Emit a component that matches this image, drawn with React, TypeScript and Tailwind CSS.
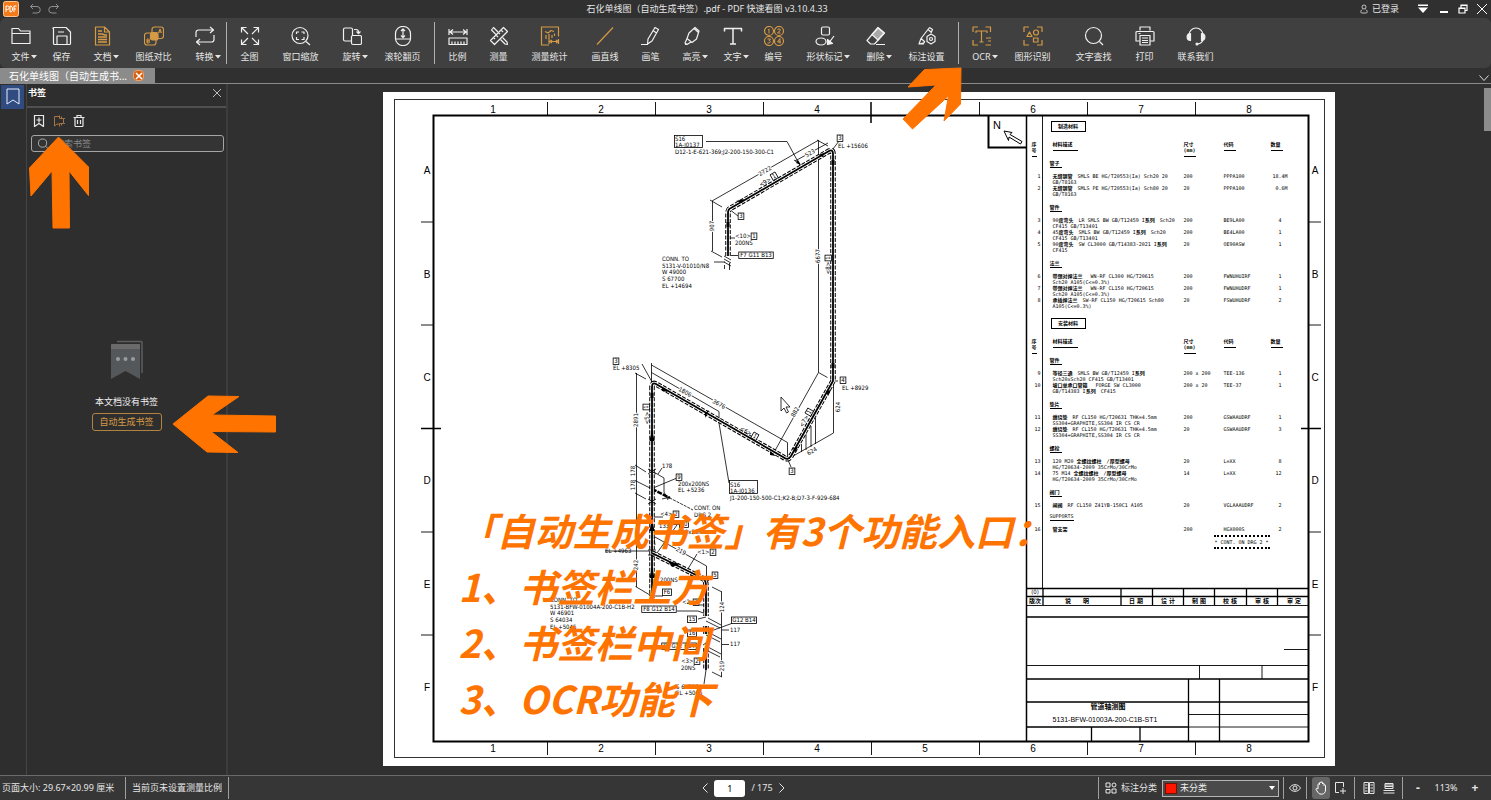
import React from "react";
import clsx from "clsx";

const GOLD = "text-[#d69a45]";

/* ---------- toolbar icons, drawn on a 20 x 20 grid ---------- */

const icons: Record<string, React.ReactNode> = {
  folder: <path d="M1 17.5V2.5h6.5l2 2.5H19v12.5zM1 7.5h18" />,
  save: <path d="M1.5 2.5v15a1 1 0 0 0 1 1h15a1 1 0 0 0 1-1V6l-4.500-4.500h-12a1 1 0 0 0-1 1zM5 18.500V10h10v8.500M6 6h6" />,
  doc: (
    <>
      <path d="M2.500 1h9l5 5v13h-14zM11.500 1v5h5" />
      <path d="M5 5h4M5 8h4l3 1h2M5 11h9M5 13.500h9M5 16h9" strokeWidth="1.500" />
    </>
  ),
  compare: (
    <>
      <rect x="8" y="1" width="11.500" height="11.500" rx="2.500" />
      <rect x="0.500" y="7" width="11.500" height="12" rx="2.500" />
      <rect x="6.500" y="6.500" width="7.500" height="7.500" rx="2" fill="currentColor" />
      <path d="M14.500 7l1.500-4 1.500 4M15 6h2M3 13v4h1.500a1 1 0 0 0 0-2H3h1.500a1 1 0 0 0 0-2z" strokeWidth="1" />
    </>
  ),
  convert: <path d="M1 11V6.500A2.500 2.500 0 0 1 3.500 4H18M15 1l3.500 3L15 7M19 9v4.500a2.500 2.500 0 0 1-2.500 2.500H2M5 13l-3.500 3L5 19" />,
  full: <path d="M8 8L1.500 1.500M1.500 6.500v-5h5M12 8l6.500-6.500M13.500 1.500h5v5M8 12l-6.500 6.500M1.500 13.500v5h5M12 12l6.500 6.500M18.500 13.500v5h-5" />,
  zoomWindow: (
    <>
      <circle cx="9" cy="9.500" r="8" />
      <path d="M15 15.500l4 3.500M5.500 8V6H8M10.500 6H13v2M13 11v2.500h-2.500M8 13.500H5.500V11" />
    </>
  ),
  rotate: <path d="M9 15H3a1.500 1.500 0 0 1-1.500-1.500v-10A1.500 1.500 0 0 1 3 2h6a1.500 1.500 0 0 1 1.500 1.500V9M10.500 9.500H18a1.500 1.500 0 0 1 1.500 1.500v6a1.500 1.500 0 0 1-1.500 1.500h-7A1.500 1.500 0 0 1 9.500 17v-6a1.500 1.500 0 0 1 1-1.500zM12 3.500h2A2.500 2.500 0 0 1 16.500 6v1M14.500 5.500l2 2 2-2" />,
  mouse: (
    <>
      <rect x="2.500" y="0.500" width="15" height="19" rx="7" />
      <path d="M3 13h14M10 3.500V11M8 5l2-2 2 2M8 9.500l2 2 2-2" />
    </>
  ),
  ratio: <path d="M1 3v6M19 3v6M2 6h16M5 3.500L2 6l3 2.500M15 3.500L18 6l-3 2.500M1 12h18v6.500H1zM4 15.500v3M7 15.500v3M10 15.500v3M13 15.500v3M16 15.500v3" />,
  measure: (
    <>
      <path d="M14.500 1.500l4 4L5.500 18.500l-4-4zM12 4l2 2M9.500 6.500l1.500 1.500M7 9l2 2M4.500 11.500L6 13" />
      <path d="M7 8.500L2.500 4l2-2.500L9 6M11.500 13.500l4.500 4.500 2.500.500-.500-2.500-4.500-4.500M2.500 4l4 4" />
    </>
  ),
  stats: (
    <>
      <path d="M9 19H1.500V1h17v9.500M5 5.500l3 1.500 3-2.500 3 1" />
      <path d="M6 9v4M9 8v5M12 9v3M14.500 7.500V10" />
      <path d="M9 13v5M18.500 13v5M10 15.500h8M12 14l-2 1.500L12 17M16 14l2 1.500-2 1.500" />
    </>
  ),
  line: <path d="M2 18.500L18 1.500" />,
  pen: <path d="M14 1.500l3.500 2L11 15l-4.500 3 .500-5zM12 4.500L15.500 7M0 18.500h7" />,
  marker: <path d="M13 1.500l4 3.500-2.500 8-4.500 3.500-5-4 2-5.500zM5 12.500L3 17l2 1.500 4-2.500M12 2.500l4.500 4M3 18.500h3" />,
  text: <path d="M1.500 5.500v-3h17v3M10 2.500v15.500M7 18h6" strokeWidth="1.500" />,
  numbers: (
    <>
      <circle cx="5" cy="5" r="4.500" />
      <circle cx="15" cy="5" r="4.500" />
      <circle cx="5" cy="15" r="4.500" />
      <circle cx="15" cy="15" r="4.500" />
      <path d="M4 4l1-1v4.500M13.500 4c0-1.500 3-1.500 3 0 0 1-3 2-3 3h3M3.500 13h3L5 14.500c2 0 2 3-1.500 2.500M16 17.500v-5L13.500 16h3.500" strokeWidth="1" />
    </>
  ),
  shapes: (
    <>
      <rect x="6.500" y="1" width="8" height="8" rx="1.500" />
      <ellipse cx="6" cy="15.500" rx="5" ry="3.500" />
      <path d="M19 10l-6 8" />
      <path d="M12.500 13.500v5l5-1z" fill="currentColor" />
    </>
  ),
  eraser: (
    <>
      <path d="M12 1.500l6.500 5.500L8.500 18H4.500L1 14.500zM10 18.500h9" />
      <path d="M12 2l6 5-6 7-6-5.500z" fill="currentColor" fillOpacity="0.600" />
    </>
  ),
  markSettings: (
    <>
      <path d="M12.500 1.500l3 2L14 7M12.500 1.500L4 12.500 2 18l6-1.500M4 12.500l4 3.500M2 18h5M11 3.500l3 2.500" />
      <path d="M14 8l4 2.500v5L14 18l-4-2.500v-5z" />
      <circle cx="14" cy="13" r="1.500" />
    </>
  ),
  ocr: <path d="M1 6V1h5M13.500 1h5v5M1 14v5h5M4 7V5h11v2M9.500 5v11M7.500 16h4M14 12h5M16 15h3M13.500 19h5.500" />,
  recognize: (
    <>
      <path d="M1 6V1h5M14 1h5v5M1 14v5h5M14 19h5v-5M4 10.500L6.500 6 9 10.500z" />
      <circle cx="13" cy="6.500" r="2.500" />
      <path d="M10.500 12h4.500v4h-4.500z" />
    </>
  ),
  search: (
    <>
      <circle cx="9.500" cy="9.500" r="8" />
      <path d="M15.500 15.500l3.500 3.500" />
    </>
  ),
  print: <path d="M5 4.500V1h10v3.500M4.500 15H1V6.500a1 1 0 0 1 1-1h16a1 1 0 0 1 1 1V15h-3.500M5 9.500h10V19H5zM7 12h6M7 14.500h6M7 16.500h6M3.500 7.500h2" />,
  headset: (
    <>
      <path d="M3 12V9a7 7 0 0 1 14 0v3.500c0 3-2 5-5 5.500" />
      <path d="M4.500 7.500v7C0 14.500 0 7.500 4.500 7.500zM15.500 7.500v7c4.500 0 4.500-7 0-7z" fill="currentColor" />
      <circle cx="11" cy="18" r="1" fill="currentColor" />
    </>
  ),
};

function Icon({ name, className }: { name: string; className?: string }) {
  return (
    <svg viewBox="0 0 20 20" className={clsx("size-5 shrink-0", className)} fill="none" stroke="currentColor" strokeWidth="1.200" strokeLinejoin="round" aria-hidden="true">
      {icons[name]}
    </svg>
  );
}

type Tool = { icon: string; label: string; gold?: boolean; menu?: boolean };

const toolGroups: Tool[][] = [
  [
    { icon: "folder", label: "文件", menu: true },
    { icon: "save", label: "保存" },
    { icon: "doc", label: "文档", gold: true, menu: true },
    { icon: "compare", label: "图纸对比", gold: true },
    { icon: "convert", label: "转换", menu: true },
  ],
  [
    { icon: "full", label: "全图" },
    { icon: "zoomWindow", label: "窗口缩放" },
    { icon: "rotate", label: "旋转", menu: true },
    { icon: "mouse", label: "滚轮翻页" },
  ],
  [
    { icon: "ratio", label: "比例" },
    { icon: "measure", label: "测量" },
    { icon: "stats", label: "测量统计", gold: true },
    { icon: "line", label: "画直线", gold: true },
    { icon: "pen", label: "画笔" },
    { icon: "marker", label: "高亮", menu: true },
    { icon: "text", label: "文字", menu: true },
    { icon: "numbers", label: "编号", gold: true },
    { icon: "shapes", label: "形状标记", menu: true },
    { icon: "eraser", label: "删除", menu: true },
    { icon: "markSettings", label: "标注设置" },
  ],
  [
    { icon: "ocr", label: "OCR", gold: true, menu: true },
    { icon: "recognize", label: "图形识别", gold: true },
    { icon: "search", label: "文字查找" },
    { icon: "print", label: "打印" },
    { icon: "headset", label: "联系我们" },
  ],
];

function toolWidth(label: string) {
  if (label.length === 4) return "w-[61px]";
  if (label === "画直线") return "w-[50px]";
  return "w-[41px]";
}

function Toolbar() {
  return (
    <div className="flex h-[50px] shrink-0 rounded-md bg-[#404040]" role="toolbar">
      {toolGroups.map((group, i) => (
        <React.Fragment key={i}>
          {i > 0 && <div className="mt-1 mr-0.5 ml-px h-[42px] w-px shrink-0 bg-[#b0b0b0]" />}
          {group.map((tool) => (
            <button key={tool.label} type="button" className={clsx("flex shrink-0 flex-col items-center gap-1 pt-2", toolWidth(tool.label))}>
              <Icon name={tool.icon} className={tool.gold ? GOLD : "text-[#f0f0f0]"} />
              <span className="relative text-[9px] leading-[13px] whitespace-nowrap">
                {tool.label}
                {tool.menu && (
                  <svg viewBox="0 0 6 4" className="absolute top-[5px] left-full ml-px h-1 w-1.5" fill="currentColor" aria-hidden="true">
                    <path d="M0 0h6L3 3.500z" />
                  </svg>
                )}
              </span>
            </button>
          ))}
        </React.Fragment>
      ))}
    </div>
  );
}

function TitleBar() {
  return (
    <header className="grid h-[18px] shrink-0 grid-cols-[1fr_auto_1fr] items-center pr-1 pl-[3px] text-[9px]">
      <div className="flex items-center">
        <svg viewBox="0 0 16 16" className="size-4" aria-hidden="true">
          <rect x="0.500" y="0.500" width="15" height="15" rx="2" fill="#f47b1c" stroke="#ffc58f" />
          <path d="M3 11V5h1.500a1.500 1.500 0 0 1 0 3.500H3M7 5v6c3.500 0 3.500-6 0-6M11 11V5h2.500M11 8h2" fill="none" stroke="#fff" />
        </svg>
        <button type="button" aria-label="撤销" className="ml-2.5 text-[#8f8f8f]">
          <svg viewBox="0 0 12 12" className="size-3" fill="none" stroke="currentColor">
            <path d="M4 1L1.500 3.500 4 6M1.500 3.500H8a3 3 0 0 1 0 6.500H3.500" />
          </svg>
        </button>
        <button type="button" aria-label="重做" className="ml-[7px] text-[#8f8f8f]">
          <svg viewBox="0 0 12 12" className="size-3" fill="none" stroke="currentColor">
            <path d="M8 1l2.500 2.500L8 6M10.500 3.500H4A3 3 0 0 0 4 10h4.500" />
          </svg>
        </button>
      </div>
      <h1 className="pr-[76px] whitespace-pre">石化单线图（自动生成书签）.pdf - PDF 快速看图 v3.10.4.33</h1>
      <div className="flex items-center justify-end">
        <button type="button" className="flex items-center gap-1">
          <svg viewBox="0 0 10 12" className="h-2.5 w-2" fill="none" stroke="currentColor">
            <circle cx="5" cy="3.500" r="2.500" />
            <path d="M3 6.500c-3 2-2 4.500-1 4.500h6c1 0 2-2.500-1-4.500" />
          </svg>
          已登录
        </button>
        <button type="button" aria-label="皮肤" className="ml-[18px]">
          <svg viewBox="0 0 12 10" className="h-2.5 w-3" fill="#fff">
            <path d="M1 0.500h10v1.500H1zM1 3.500h10L6 9z" />
          </svg>
        </button>
        <button type="button" aria-label="最小化" className="ml-2.5">
          <svg viewBox="0 0 10 10" className="size-2.5" stroke="#fff" strokeWidth="2">
            <path d="M1 8h8" />
          </svg>
        </button>
        <button type="button" aria-label="还原" className="ml-[9px]">
          <svg viewBox="0 0 10 10" className="size-2.5" stroke="#fff" fill="none" strokeWidth="1.200">
            <path d="M1 4h6v5H1zM3 4V1h6v5.500H7M1 4.500h6M3 1.500h6" />
          </svg>
        </button>
        <button type="button" aria-label="关闭" className="ml-[9px]">
          <svg viewBox="0 0 10 10" className="size-2.5" stroke="#fff">
            <path d="M0 0l10 10M10 0L0 10" />
          </svg>
        </button>
      </div>
    </header>
  );
}

function TabBar() {
  return (
    <div className="flex h-4 shrink-0 items-stretch border-b border-[#8a8a8a]">
      <div className="flex w-[155px] items-center gap-1 bg-[#8b8b8b] pl-[9px] text-[10px] leading-4 text-white">
        <span className="w-[120px] truncate">石化单线图（自动生成书...</span>
        <button type="button" aria-label="关闭标签" className="grid size-[11px] place-items-center rounded-sm border border-[#f0a060] bg-[#d45f14]">
          <svg viewBox="0 0 8 8" className="size-2" stroke="#fff" strokeWidth="1.500">
            <path d="M1 1l6 6M7 1L1 7" />
          </svg>
        </button>
      </div>
      <button type="button" aria-label="更多标签" className="mt-1 mr-[2px] ml-auto">
        <svg viewBox="0 0 10 10" className="size-2.5" fill="none" stroke="#ddd">
          <path d="M0.500 2.500L5 7.500l4.500-5" />
        </svg>
      </button>
    </div>
  );
}

function BookmarkPanel() {
  return (
    <aside className="flex shrink-0 bg-[#2e2e2e]">
      <nav className="w-[27px] border-r border-[#454545] pt-px pl-px">
        <button type="button" aria-label="书签" className="grid h-6 w-[23px] place-items-center bg-[#2f4b80]">
          <svg viewBox="0 0 14 18" className="h-[18px] w-3.5" fill="none" stroke="#e8eefc">
            <path d="M1 1h12v15l-6-4-6 4z" />
          </svg>
        </button>
      </nav>
      <section className="flex w-[201px] flex-col border-r-2 border-[#3d3d3d]">
        <div className="flex h-6 items-center justify-between border-b-2 border-[#505050] pr-1 pb-1 pl-px">
          <h2 className="text-[9px] leading-3 font-bold text-white">书签</h2>
          <button type="button" aria-label="关闭面板">
            <svg viewBox="0 0 10 10" className="size-2.5" stroke="#bbb">
              <path d="M1 1l8 8M9 1L1 9" />
            </svg>
          </button>
        </div>
        <div className="flex gap-2 pt-[7px] pl-1.5 text-[#e8e8e8]">
          <button type="button" aria-label="添加书签">
            <svg viewBox="0 0 12 12" className="size-3" fill="none" stroke="currentColor" strokeWidth="1.200">
              <path d="M2 0.500h8.500v11L6 8.500l-4.500 3V0.500zM6 2.500v5M3.500 5h5" />
            </svg>
          </button>
          <button type="button" aria-label="自动生成书签" className="text-[#a87443]">
            <svg viewBox="0 0 12 12" className="size-3" fill="none" stroke="currentColor">
              <path d="M6.500 1.500h-5v9.500L4 9h2.500v2.500M6.500 0.500v3h4v5h-4M8.500 1.500v2M10.500 3.500h1.500M10.500 8.500H12M8.500 8.500v2" />
            </svg>
          </button>
          <button type="button" aria-label="删除书签">
            <svg viewBox="0 0 12 12" className="size-3" fill="none" stroke="currentColor" strokeWidth="1.200">
              <path d="M0.500 2.500h11M4 2.500v-2h4v2M2 2.500v8a1 1 0 0 0 1 1h6a1 1 0 0 0 1-1v-8M4.500 5v4M7.500 5v4" />
            </svg>
          </button>
        </div>
        <label className="mx-1 mt-2 mr-[2px] flex h-[17px] items-center rounded-[3px] border border-[#a5a5a5] bg-[#343434] pl-1.5">
          <svg viewBox="0 0 12 12" className="size-3 text-[#b5b5b5]" fill="none" stroke="currentColor">
            <circle cx="5" cy="5" r="4.500" />
            <path d="M8.500 8.500L11 11" />
          </svg>
          <input type="search" aria-label="搜索书签" placeholder="搜索书签" className="ml-1.5 w-full min-w-0 bg-transparent text-[9px] leading-3 outline-none placeholder:text-[#8a8a8a]" />
        </label>
        <div className="flex grow flex-col items-center pt-[188px]">
          <svg viewBox="0 0 32 40" className="h-10 w-8" aria-hidden="true">
            <path d="M6 1.500h24a1 1 0 0 1 1 1V33" fill="none" stroke="#5c5e60" strokeWidth="1.500" />
            <path d="M0 5a1 1 0 0 1 1-1h27a1 1 0 0 1 1 1v34L14.500 31 0 39z" fill="#55585b" />
            <path d="M0 5a1 1 0 0 1 1-1h27a1 1 0 0 1 1 1v4H0z" fill="#6b6b6b" />
            <circle cx="7" cy="19" r="2" fill="#9a9c9e" />
            <circle cx="14.500" cy="19" r="2" fill="#9a9c9e" />
            <circle cx="22" cy="19" r="2" fill="#9a9c9e" />
          </svg>
          <p className="mt-4 text-[9px] leading-3 text-[#f0f0f0]">本文档没有书签</p>
          <button type="button" className="mt-[5px] h-[18px] w-[70px] rounded-[3px] border border-[#b08342] text-[9px] leading-3 text-[#d69a45]">
            自动生成书签
          </button>
        </div>
      </section>
    </aside>
  );
}

/* ---------- drawing sheet ---------- */

const DRAWING_FONT = "font-['DejaVu_Sans_Condensed','DejaVu_Sans','Noto_Sans_CJK_SC',sans-serif]";
const TABLE_FONT = "font-['DejaVu_Sans_Mono','Noto_Sans_CJK_SC',monospace]";

type LabelProps = { x: number; y: number; t: string; r?: number; mid?: boolean; size?: number; bold?: boolean; halo?: boolean };

function Label({ x, y, t, r = 0, mid, size = 6, bold, halo }: LabelProps) {
  return (
    <text
      x={x}
      y={y + size * 0.35}
      fontSize={size}
      fontWeight={bold ? 700 : 400}
      textAnchor={mid ? "middle" : "start"}
      transform={r ? `rotate(${r} ${x} ${y})` : undefined}
      fill="#000"
      stroke={halo ? "#fff" : "none"}
      strokeWidth={halo ? 2 : 0}
      paintOrder="stroke"
    >
      {t}
    </text>
  );
}

const Dim = ({ x, y, t, r }: { x: number; y: number; t: string; r?: number }) => <Label x={x} y={y} t={t} r={r} mid halo />;

function Tag({ x, y, t, r = 0 }: { x: number; y: number; t: string; r?: number }) {
  const w = t.length * 3.2 + 2.5;
  return (
    <g transform={`rotate(${r} ${x} ${y})`}>
      <rect x={x - w / 2} y={y - 3} width={w} height="6.500" fill="#fff" stroke="#000" strokeWidth="0.800" />
      <Label x={x} y={y} t={t} mid />
    </g>
  );
}

const mainPipe = "M728 256V213Q728 209 731 208L829 151Q833 149 833 154V381L791 456Q788 461 783 457L656 384Q652 382 652 387V596";
const branchPipe = "M652 553L702 578Q706 580 706 585V616M706 626V634M706 648V670";

const columns = [493, 601, 709, 817, 925, 1033, 1141, 1249];
const columnTicks = [547, 655, 763, 979, 1087, 1195];
const rows: [string, number][] = [["A", 170], ["B", 274], ["C", 377], ["D", 480], ["E", 584], ["F", 687]];
const rowTicks = [222, 325, 532, 635];
const revisionLabels: [string, number][] = [["版次", 1035], ["说　　明", 1077], ["日 期", 1136], ["设 计", 1168], ["制 图", 1199], ["校 核", 1230], ["审 核", 1262], ["审 定", 1294]];

function Pipe({ d }: { d: string }) {
  return (
    <g fill="none">
      <path d={d} stroke="#000" strokeWidth="5.500" strokeDasharray="4 1.500" />
      <path d={d} stroke="#fff" strokeWidth="3.500" />
      <path d={d} stroke="#000" strokeWidth="1.800" />
    </g>
  );
}

function SheetDrawing() {
  return (
    <svg viewBox="383 92 952 674" className={clsx("block h-[674px] w-[952px]", DRAWING_FONT)} role="img" aria-label="管道轴测图">
      <g fill="none" stroke="#000">
        <rect x="394.500" y="99.500" width="930" height="658" stroke="#333" />
        <rect x="433.500" y="115.500" width="875" height="626" strokeWidth="2" />
        <path d={columnTicks.map((x) => `M${x}.500 102V115M${x}.500 742V755`).join("")} strokeWidth="0.900" />
        <path d={rowTicks.map((y) => `M421 ${y}H433M1309 ${y}H1321`).join("")} strokeWidth="0.900" />
        <path d="M871 102V123M421 428.500H441M1301 428.500H1321" strokeWidth="1.500" />
        <path d="M871.500 742V755" strokeWidth="0.900" />
        <path d="M1026.500 115V742" strokeWidth="1.500" />
        <path d="M1042.500 115V588" strokeWidth="0.900" />
        <path d="M988.500 115V147.500H1026" strokeWidth="2" />
        <path d="M1004 131l8 1.500-2 2 12 7-1.500 2.500-11.500-7-.500 3.500z" strokeWidth="1" />
      </g>
      <g className="font-['Liberation_Sans']">
        {columns.map((x, i) => (
          <React.Fragment key={x}>
            <Label x={x} y={109} t={String(i + 1)} size={10} mid />
            <Label x={x} y={748} t={String(i + 1)} size={10} mid />
          </React.Fragment>
        ))}
        {rows.map(([t, y]) => (
          <React.Fragment key={t}>
            <Label x={427} y={y} t={t} size={10} mid />
            <Label x={1315} y={y} t={t} size={10} mid />
          </React.Fragment>
        ))}
        <Label x={997} y={125} t="N" size={11} mid />
      </g>

      {/* dimension and extension lines */}
      <g fill="none" stroke="#000" strokeWidth="0.800">
        <path d="M712.500 201V251M710 200l12 7M711 251l11 6M712 201L818 140.500M817 140l11 6M795 161l33-18M794 160l6 4M706 141.500h81l13 24" />
        <path d="M818.500 140V372.500L774.500 451.500M818.500 372.500l9 5M833.500 381V433L788 459M815.500 418v26M811 426v21M806 434v16M801.500 444v8" />
        <path d="M651.500 363V382M651.500 365l136 77.500V457M651.500 372.500L719 411.500V422M719 423l10 60M642 364l10 18M788 460l3 7M833 381h5" />
        <path d="M636.500 373V587M635 373l11 6M635 465l11 7M635 480.500l17 8.500M635 493l11 6M635.500 586.500L655 598M652 471l12 7v14M662 468l-4 6M677 478l-24 10" />
        <path d="M652 489L670 498" strokeWidth="2.500" strokeDasharray="5 1" />
        <path d="M666 496l27 14" strokeDasharray="3 1" />
        <path d="M655 537l51.500 29V581M697 554l-11 18M651 517h12M669 524.500h10M652 551h-47M655 545l-1-8M677 525l-20 28" />
        <path d="M721.500 591.500V677M712 587l10 5M712 672l10 5M651 596h12M677 611h21l8 3M733 623l-22 8M722 630h7M722 644.500h7M698 619l8-2M703 645l3-2M706 670l-2 14M713 576l-6 6" />
        <path d="M839 141l-6 8M738 216l-9-7M729 238h6M738 255.500h-7M714 262h11M724 256l7 4M724 259l7 4M724 262l7 4M724.500 265v4M729.500 263v7" />
        <path d="M708 618l13 7M706 621l14 7M708 632l13 7M706 635l14 7M708 647l13 7M706 650l14 7M697 605h9" />
      </g>

      <Pipe d={mainPipe} />
      <Pipe d={branchPipe} />
      <g fill="#000">
        <path d="M649.500 441l2.500-12 2.500 12zM649.500 531l2.500-12 2.500 12zM649.500 578l2.500-12 2.500 12zM668 561l12 3-8 3zM690 574l9 5-8 1zM650.500 393h3v5h-3zM736 201l8-2-2 4zM818 155l6-2-1 4zM831.500 160h3v5h-3zM726.500 222h3v5h-3zM662 387l6 5-6-1zM770 451l6 5-6-1zM826 391l5-1-3 6zM793 448l5-1-3 6zM831.500 363h3v5h-3zM709 410l-4 3v5zM798 160l3 5-5-2z" />
        <path d="M648 469l8 5M648 474l8-5M648 499l8 5M648 504l8-5M648 550h8M648 555h8M664 492l4 8M662 499l8-2" stroke="#000" strokeWidth="0.800" />
      </g>

      {/* upper run */}
      <rect x="674.500" y="135.500" width="28" height="12" fill="none" stroke="#000" strokeWidth="0.800" />
      <Label x={675} y={139} t="S16" />
      <Label x={675} y={145} t="1A-J0137" />
      <Label x={675} y={152} t="D12-1-E-621-369;J2-200-150-300-C1" />
      <Tag x={840} y={138} t="3" />
      <Label x={838} y={146} t="EL +15606" />
      <Dim x={765} y={171} t="2722" r={-30} />
      <Dim x={810} y={153} t="523" r={-30} />
      <Label x={765} y={182} t="<9>" r={-30} mid />
      <Tag x={774} y={176} t="1" r={-30} />
      <Dim x={712} y={226} t="907" r={-90} />
      <Tag x={741} y={216} t="3" />
      <Label x={735} y={236} t="<10>" />
      <Tag x={754} y={236} t="1" />
      <Label x={735} y={243} t="200NS" />
      <Tag x={756} y={255} t="F7 G11 B13" />
      {["CONN. TO", "5131-V-01010/N8", "W 49000", "S 67700", "EL +14694"].map((t, i) => (
        <Label key={t} x={662} y={259 + i * 6.6} t={t} />
      ))}
      <Dim x={818} y={256} t="6677" r={-90} />
      <Tag x={828} y={258} t="1" r={-90} />
      <Label x={828} y={268} t="<8>" r={-90} mid />

      {/* middle run */}
      <Tag x={616} y={361} t="3" />
      <Label x={613} y={368} t="EL +8305" />
      <Dim x={685} y={392} t="1806" r={30} />
      <Dim x={719} y={404} t="3676" r={30} />
      <Dim x={636} y={420} t="2891" r={-90} />
      <Tag x={646} y={407} t="1" r={-90} />
      <Label x={647} y={418} t="<5>" r={-90} mid />
      <Label x={746} y={431} t="<6>" r={30} mid />
      <Tag x={755} y={436} t="1" r={30} />
      <Dim x={795} y={412} t="882" r={-60} />
      <Tag x={809} y={412} t="1" r={-60} />
      <Label x={804} y={421} t="<7>" r={-60} mid />
      <Tag x={843} y={380} t="4" />
      <Label x={842} y={388} t="EL +8929" />
      <Label x={838} y={407} t="624" r={-90} mid />
      <Dim x={812} y={451} t="624" r={-30} />
      <Tag x={792} y={471} t="3" />
      <rect x="729.500" y="480.500" width="28" height="13" fill="none" stroke="#000" strokeWidth="0.800" />
      <Label x={730} y={485} t="S16" />
      <Label x={730} y={491} t="1A-J0136" />
      <Label x={730} y={498} t="J1-200-150-500-C1;K2-B;D7-3-F-929-684" />
      <path d="M781 397v14l3-3 2.500 5 2-1-2.500-5h4z" fill="#fff" stroke="#000" strokeWidth="0.800" />

      {/* lower run */}
      <Label x={633} y={471} t="178" r={-90} mid />
      <Label x={633} y={485} t="178" r={-90} mid />
      <Label x={662} y={466} t="178" />
      <Tag x={679} y={477} t="9" />
      <Label x={678} y={484} t="200x200NS" />
      <Label x={678} y={490} t="EL +5236" />
      <Label x={694} y={508} t="CONT. ON" />
      <Label x={694} y={515} t="DRG 2" />
      <Label x={660} y={514} t="<4>" />
      <Tag x={676} y={514} t="2" />
      <Label x={659} y={526} t="133" />
      <Tag x={684} y={524} t="10" />
      <Label x={678} y={532} t="200x20NS" />
      <Label x={605} y={551} t="EL +4963" />
      <Dim x={681} y={551} t="219" r={30} />
      <Label x={697} y={552} t="<1>" />
      <Tag x={713} y={552} t="2" />
      <Dim x={636} y={565} t="242" r={-90} />
      <Label x={660} y={580} t="200NS" />
      <Tag x={715} y={575} t="5" />
      <Tag x={667} y={592} t="F6" />
      {["CONN. TO", "5131-BFW-01004A-200-C1B-H2", "W 46901", "S 64034", "EL +5045"].map((t, i) => (
        <Label key={t} x={550} y={600 + i * 6.6} t={t} />
      ))}
      <Label x={682} y={602} t="<2>" />
      <Tag x={696} y={602} t="2" />
      <Tag x={659} y={609} t="F8 G12 B14" />
      <Tag x={692} y={619} t="15" />
      <Tag x={744} y={620} t="G12 B14" />
      <Label x={730} y={630} t="117" />
      <Label x={730} y={644} t="117" />
      <Tag x={692} y={633} t="16" />
      <Dim x={722} y={607} t="124" r={-90} />
      <Dim x={722} y={666} t="219" r={-90} />
      <Tag x={679} y={646} t="F8 G12 B14" />
      <Label x={681} y={661} t="<3>" />
      <Tag x={697} y={661} t="2" />
      <Label x={681} y={668} t="20NS" />
      <Label x={676} y={687} t="S 64376" />
      <Label x={676} y={693} t="EL +5005" />

      {/* title block */}
      <g fill="none" stroke="#000">
        <path d="M1027 588.500h282M1027 596.500h282M1027 617h282M1027 679h282M1027 702h282M1027 727h161" strokeWidth="1.600" />
        <path d="M1043 588v17M1121 588v17M1152.500 588v17M1183.500 588v17M1214.500 588v17M1246.500 588v17M1277.500 588v17M1188.500 679v63M1219.500 679v63M1091.500 727v15M1140 727v15" strokeWidth="1.300" />
        <path d="M1027 605.500h282M1284 649.500h25M1027 665.500h282M1199.500 665v14M1262 665v14M1188 714.500h121M1188 727h121" strokeWidth="0.900" />
      </g>
      <Label x={1035} y={592} t="(0)" size={6} mid />
      {revisionLabels.map(([t, x]) => (
        <Label key={t} x={x} y={601} t={t} size={6} bold mid />
      ))}
      <Label x={1108} y={707} t="管道轴测图" size={7} bold mid />
      <text x="1105" y="722" fontSize="7" textAnchor="middle" className="font-['Liberation_Sans']">
        5131-BFW-01003A-200-C1B-ST1
      </text>
    </svg>
  );
}

type Item = [no: number, lines: string[], size: string, code: string, qty: string];
type Group = { name: string; items: Item[] };

const fabrication: Group[] = [
  {
    name: "管子",
    items: [
      [1, ["无缝钢管　SMLS BE HG/T20553(Ia) Sch20 20", "GB/T8163"], "200", "PPPA100", "18.4M"],
      [2, ["无缝钢管　SMLS PE HG/T20553(Ia) Sch80 20", "GB/T8163"], "20", "PPPA100", "0.6M"],
    ],
  },
  {
    name: "管件",
    items: [
      [3, ["90度弯头　LR SMLS BW GB/T12459 I系列　Sch20", "CF415 GB/T13401"], "200", "BE9LA00", "4"],
      [4, ["45度弯头　SMLS BW GB/T12459 I系列　Sch20", "CF415 GB/T13401"], "200", "BE4LA00", "1"],
      [5, ["90度弯头　SW CL3000 GB/T14383-2021 I系列", "CF415"], "20", "OE90ASW", "1"],
    ],
  },
  {
    name: "法兰",
    items: [
      [6, ["带颈对焊法兰　 WN-RF CL300 HG/T20615", "Sch20 A105(C<=0.3%)"], "200", "FWNUHUIRF", "1"],
      [7, ["带颈对焊法兰　 WN-RF CL150 HG/T20615", "Sch20 A105(C<=0.3%)"], "200", "FWNUHUDRF", "1"],
      [8, ["承插焊法兰　SW-RF CL150 HG/T20615 Sch80", "A105(C<=0.3%)"], "20", "FSWUHUDRF", "2"],
    ],
  },
];

const erection: Group[] = [
  {
    name: "管件",
    items: [
      [9, ["等径三通　SMLS BW GB/T12459 I系列", "Sch20xSch20 CF415 GB/T13401"], "200 x 200", "TEE-136", "1"],
      [10, ["坡口单承口管箍　 FORGE SW CL3000", "GB/T14383 I系列　CF415"], "200 x 20", "TEE-37", "1"],
    ],
  },
  {
    name: "垫片",
    items: [
      [11, ["缠绕垫　RF CL150 HG/T20631 THK=4.5mm", "SS304+GRAPHITE,SS304 IR CS CR"], "200", "GSWAAUDRF", "1"],
      [12, ["缠绕垫　RF CL150 HG/T20631 THK=4.5mm", "SS304+GRAPHITE,SS304 IR CS CR"], "20", "GSWAAUDRF", "3"],
    ],
  },
  {
    name: "螺栓",
    items: [
      [13, ["120 M20 全螺纹螺柱　/厚型螺母", "HG/T20634-2009 35CrMo/30CrMo"], "20", "L=XX", "8"],
      [14, ["75 M14 全螺纹螺柱　/厚型螺母", "HG/T20634-2009 35CrMo/30CrMo"], "14", "L=XX", "12"],
    ],
  },
  { name: "阀门", items: [[15, ["闸阀　RF CL150 Z41YB-150C1 A105"], "20", "VGLAAAUDRF", "2"]] },
  { name: "SUPPORTS", items: [[16, ["管支架"], "200", "HGX000S", "2"]] },
];

/* Chinese runs are set bold, Latin runs regular. */
function MixedLine({ text }: { text: string }) {
  return (
    <div>
      {text.split(/([\u4e00-\u9fff]+)/).map((run, i) => (i % 2 ? <b key={i}>{run}</b> : run))}
    </div>
  );
}

function MaterialTable({ title, groups }: { title: string; groups: Group[] }) {
  const head = "inline-block border-b border-black pb-[3px] font-bold";
  return (
    <table className="w-[260px] table-fixed border-collapse text-left text-[5px] leading-[6px] whitespace-nowrap">
      <caption className="pb-[9px] pl-[23px] text-left">
        <span className="block h-[11px] w-[35px] border border-black text-center leading-[9px] font-bold">{title}</span>
      </caption>
      <colgroup>
        <col className="w-3.5" />
        <col className="w-[142px]" />
        <col className="w-10" />
        <col className="w-[47px]" />
        <col className="w-[17px]" />
      </colgroup>
      <thead>
        <tr className="h-4 align-top">
          <th className="pl-1"><span className={head}>序<br />号</span></th>
          <th className="pl-[11px]"><span className={clsx(head, "w-[25px]")}>材料描述</span></th>
          <th><span className={head}>尺寸<br />(mm)</span></th>
          <th><span className={clsx(head, "w-3")}>代码</span></th>
          <th><span className={clsx(head, "w-3")}>数量</span></th>
        </tr>
      </thead>
      {groups.map((g, gi) => (
        <tbody key={g.name}>
          <tr className={clsx("align-bottom", gi === 0 ? "h-4" : g.name === "SUPPORTS" ? "h-[18px]" : "h-5")}>
            <td />
            <th colSpan={4} className="pb-[5px] pl-2">
              <span className={clsx("inline-block min-w-3 border-b border-black leading-[8px]", g.name === "SUPPORTS" ? "font-normal" : "font-bold")}>{g.name}</span>
            </th>
          </tr>
          {g.items.map(([no, lines, size, code, qty]) => (
            <tr key={no} className="align-top">
              <td className="pr-px text-right">{no}</td>
              <td className="pl-[11px]">
                {lines.map((l) => (
                  <MixedLine key={l} text={l} />
                ))}
              </td>
              <td>{size}</td>
              <td>{code}</td>
              <td className={clsx("text-right", !qty.endsWith("M") && "pr-1.5")}>{qty}</td>
            </tr>
          ))}
        </tbody>
      ))}
    </table>
  );
}

function Sheet() {
  return (
    <div className="relative shrink-0 bg-white text-black">
      <SheetDrawing />
      <div className={clsx("absolute top-[29px] left-[645px] flex flex-col gap-[9px]", TABLE_FONT)}>
        <MaterialTable title="制造材料" groups={fabrication} />
        <MaterialTable title="安装材料" groups={erection} />
        <p className="-mt-1.5 ml-[186px] w-14 border-y-2 border-dotted border-black py-0.5 text-center text-[5px] leading-[6px] whitespace-nowrap">* CONT. ON DRG 2 *</p>
      </div>
      <div className="absolute top-[410px] left-[76px] font-['Noto_Sans_CJK_SC',sans-serif] text-[38px] leading-[56px] font-bold whitespace-nowrap text-[#ff7300] italic">
        <p>「自动生成书签」有3个功能入口：</p>
        <p>1、书签栏上方</p>
        <p>2、书签栏中间</p>
        <p>3、OCR功能下</p>
      </div>
    </div>
  );
}

const Divider = () => <span className="h-[22px] w-px shrink-0 bg-[#a0a0a0]" />;

function StatusBar() {
  return (
    <footer className="grid h-[25px] shrink-0 grid-cols-[1fr_auto_1fr] items-center border-t border-[#6a6a6a] bg-[#363636] text-[9px] leading-3 whitespace-nowrap">
      <div className="flex items-center">
        <span className="w-[125px] pl-0.5">页面大小: 29.67×20.99 厘米</span>
        <Divider />
        <span className="w-[102px] pl-1.5">当前页未设置测量比例</span>
        <Divider />
      </div>
      <div className="flex items-center gap-1.5 pr-1">
        <button type="button" aria-label="上一页">
          <svg viewBox="0 0 6 10" className="h-2.5 w-1.5" fill="none" stroke="currentColor"><path d="M5.500 0.500L1 5l4.500 4.500" /></svg>
        </button>
        <input aria-label="页码" defaultValue="1" className="h-[17px] w-[31px] rounded-[3px] bg-white text-center text-black" />
        <span>/ 175</span>
        <button type="button" aria-label="下一页">
          <svg viewBox="0 0 6 10" className="h-2.5 w-1.5" fill="none" stroke="currentColor"><path d="M0.500 0.500L5 5 0.500 9.500" /></svg>
        </button>
      </div>
      <div className="flex items-center justify-end">
        <Divider />
        <svg viewBox="0 0 12 12" className="mr-1 ml-1.5 size-3" fill="none" stroke="currentColor" aria-hidden="true">
          <path d="M1 1h4v4H1zM7 7h4v4H7zM1 7.500h4V11H1z" />
          <circle cx="9" cy="3" r="2" />
        </svg>
        <label htmlFor="category" className="w-[41px]">标注分类</label>
        <div className="relative">
          <span className="absolute top-[3px] left-[3px] h-[11px] w-3 border border-[#7a0c00] bg-[#ff1500]" />
          <select id="category" className="h-[17px] w-[117px] appearance-none border border-[#b5b5b5] bg-[#4a4a4a] pl-[17px] text-[9px] leading-3 text-[#f0f0f0]">
            <option>未分类</option>
          </select>
          <svg viewBox="0 0 6 4" className="pointer-events-none absolute top-1.5 right-1 h-1 w-1.5" fill="#fff"><path d="M0 0h6L3 4z" /></svg>
        </div>
        <span className="w-1" />
        <Divider />
        <button type="button" aria-label="显示标注" className="mx-[5px]">
          <svg viewBox="0 0 12 10" className="h-2.5 w-3" fill="none" stroke="currentColor">
            <path d="M0.500 5C3 0.500 9 0.500 11.500 5 9 9.500 3 9.500 0.500 5z" />
            <circle cx="6" cy="5" r="2" />
          </svg>
        </button>
        <Divider />
        <button type="button" aria-label="手形工具" className="ml-[5px] grid h-[22px] w-[18px] place-items-center rounded-[3px] bg-[#666]">
          <svg viewBox="0 0 12 14" className="h-3.5 w-3" fill="none" stroke="#fff" strokeLinejoin="round">
            <path d="M3 8V3.500c0-1 1.500-1 1.500 0V2c0-1 1.500-1 1.500 0v-.500c0-1 1.500-1 1.500 0V3c0-1 1.500-1 1.500 0v1.500c0-1 1.500-1 1.500 0V9c0 5-6 5-7.500 2.500L1 8.500c-.500-1 1-1.500 2-.500z" />
          </svg>
        </button>
        <button type="button" aria-label="选择工具" className="mx-1">
          <svg viewBox="0 0 12 12" className="size-3" fill="none" stroke="currentColor">
            <path d="M5 10.500H1.500v-10h8V5M9 6v6M6 9h6" />
          </svg>
        </button>
        <span className="w-1" />
        <Divider />
        <button type="button" aria-label="双页" className="mx-2">
          <svg viewBox="0 0 12 12" className="size-3" fill="none" stroke="currentColor">
            <path d="M1 0.500h4.500v11H1zM6.500 0.500H11v11H6.500zM2 3h2.500M2 6h2.500M2 9h2.500M7.500 3H10M7.500 6H10M7.500 9H10" />
          </svg>
        </button>
        <button type="button" aria-label="连续页" className="mr-[7px]">
          <svg viewBox="0 0 12 12" className="size-3" fill="none" stroke="currentColor">
            <path d="M2 1.500h8v5H2zM0.500 8.500h11M0.500 11h11M2 3h8M2 4.500h8" />
          </svg>
        </button>
        <Divider />
        <button type="button" aria-label="缩小" className="mx-3 w-1.5 text-xs leading-3 font-bold">-</button>
        <span className="w-[26px] text-center">113%</span>
        <button type="button" aria-label="放大" className="mr-3 ml-3 w-2 text-xs leading-3 font-bold">+</button>
      </div>
    </footer>
  );
}

/* ---------- callout arrows laid over the window ---------- */

function Callout({ points, box, className }: { points: string; box: string; className: string }) {
  return (
    <svg viewBox={box} className={clsx("pointer-events-none absolute", className)} fill="#ff7300" stroke="#ff7300" strokeWidth="1" strokeLinejoin="round" aria-hidden="true">
      <polygon points={points} />
    </svg>
  );
}

export default function App() {
  return (
    <div className="relative flex h-screen flex-col overflow-hidden bg-[#303030] font-['Noto_Sans','Noto_Sans_CJK_SC',sans-serif] text-[#e6e6e6]">
      <TitleBar />
      <Toolbar />
      <TabBar />
      <main className="flex min-h-0 grow">
        <BookmarkPanel />
        <div className="relative flex min-w-0 grow justify-center overflow-hidden pt-2 pr-0.5">
          <div>
            <Sheet />
          </div>
          <div className="absolute top-1 right-0 h-[43px] w-[7px] bg-[#8c8c8c]" />
        </div>
      </main>
      <StatusBar />
      <Callout box="28 136 62 94" className="top-[136px] left-7 h-[94px] w-[62px]" points="58.500,137 88.500,167 88.500,195.500 69,171 69.500,228 53,228 52,171 31,196 29.500,168" />
      <Callout box="171 394 106 62" className="top-[394px] left-[171px] h-[62px] w-[106px]" points="173,424 208,396 239,396.500 212,415 275.500,416 275.500,432 211,431.500 238,452.500 207,452" />
      <Callout box="900 66 64 66" className="top-[66px] left-[900px] h-[66px] w-16" points="924.500,69.500 961,68 960.500,104 944,121 948.500,96 912.500,129 903,119 936,85 908,87" />
    </div>
  );
}
